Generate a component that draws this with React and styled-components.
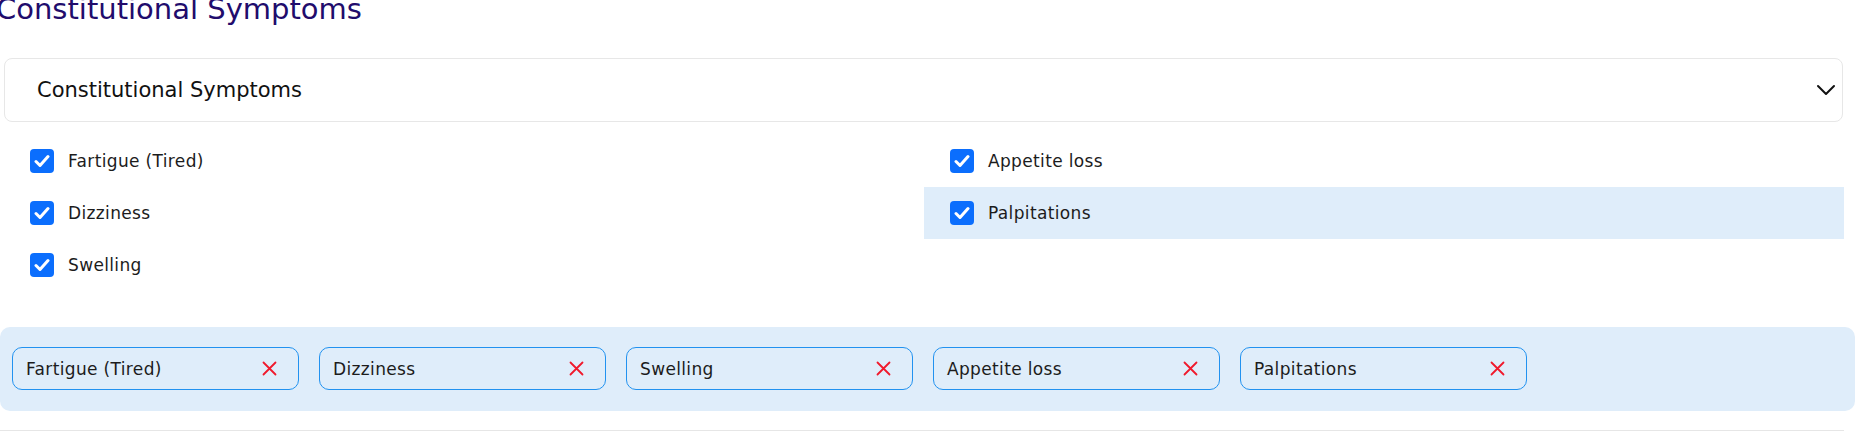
import React from "react";
import styled, { createGlobalStyle } from "styled-components";

const GlobalStyle = createGlobalStyle`
  * { box-sizing: border-box; }
  body {
    margin: 0;
    background: #ffffff;
    font-family: "DejaVu Sans", "Open Sans", sans-serif;
    color: #1c1c1c;
  }
`;

const Page = styled.div`
  width: 1863px;
  height: 444px;
  overflow: hidden;
`;

const Title = styled.h2`
  margin: -8px 0 32px -4px;
  font-size: 29px;
  line-height: 34px;
  font-weight: 400;
  color: #210c6c;
  white-space: nowrap;
`;

const Select = styled.div`
  margin-left: 4px;
  width: 1839px;
  height: 64px;
  border: 1px solid #e7e7e7;
  border-radius: 8px;
  display: flex;
  align-items: center;
  justify-content: space-between;
  padding: 0 6px 0 32px;
  font-size: 21px;
  color: #111;
`;

const Options = styled.div`
  margin: 13px 0 0 4px;
  width: 1840px;
  display: grid;
  grid-template-columns: 1fr 1fr;
  grid-template-rows: repeat(3, 52px);
  grid-auto-flow: column;
`;

const OptionRow = styled.label`
  display: flex;
  align-items: center;
  gap: 14px;
  padding-left: 26px;
  font-size: 17px;
  letter-spacing: 0.35px;
  color: #1c1c1c;
  background: ${(p) => (p.$active ? "#dfedfa" : "transparent")};
`;

const Box = styled.span`
  width: 24px;
  height: 24px;
  border-radius: 4px;
  background: #0b6efd;
  display: flex;
  align-items: center;
  justify-content: center;
`;

const Chips = styled.div`
  margin-top: 36px;
  width: 1855px;
  height: 84px;
  background: #dfedfa;
  border-radius: 10px;
  padding: 20px 12px;
  display: flex;
  gap: 20px;
`;

const Chip = styled.div`
  width: 287px;
  height: 43px;
  border: 1.5px solid #2192f0;
  border-radius: 10px;
  display: flex;
  align-items: center;
  justify-content: space-between;
  padding: 0 21px 0 13px;
  font-size: 17px;
  letter-spacing: 0.35px;
  color: #1c1c1c;
`;

const Divider = styled.div`
  margin-top: 19px;
  width: 1844px;
  height: 1px;
  background: #e6e6e6;
`;

const Check = () => (
  <svg width="16" height="14" viewBox="0 0 16 14" fill="none">
    <polyline points="2,7.5 6,11.5 14,2.5" stroke="#fff" strokeWidth="3" strokeLinecap="round" strokeLinejoin="round" />
  </svg>
);

const Chevron = () => (
  <svg width="20" height="12" viewBox="0 0 20 12" fill="none">
    <polyline points="2,2 10,10 18,2" stroke="#111" strokeWidth="2" strokeLinecap="round" strokeLinejoin="round" />
  </svg>
);

const Cross = () => (
  <svg width="15" height="15" viewBox="0 0 15 15" fill="none">
    <path d="M1.5 1.5 L13.5 13.5 M13.5 1.5 L1.5 13.5" stroke="#f0192c" strokeWidth="1.8" strokeLinecap="round" />
  </svg>
);

const options = [
  { label: "Fartigue (Tired)" },
  { label: "Dizziness" },
  { label: "Swelling" },
  { label: "Appetite loss" },
  { label: "Palpitations", active: true },
];

export default function App() {
  return (
    <Page>
      <GlobalStyle />
      <Title>Constitutional Symptoms</Title>
      <Select>
        <span>Constitutional Symptoms</span>
        <Chevron />
      </Select>
      <Options>
        {options.map((o) => (
          <OptionRow key={o.label} $active={o.active}>
            <Box>
              <Check />
            </Box>
            {o.label}
          </OptionRow>
        ))}
      </Options>
      <Chips>
        {options.map((o) => (
          <Chip key={o.label}>
            <span>{o.label}</span>
            <Cross />
          </Chip>
        ))}
      </Chips>
      <Divider />
    </Page>
  );
}
